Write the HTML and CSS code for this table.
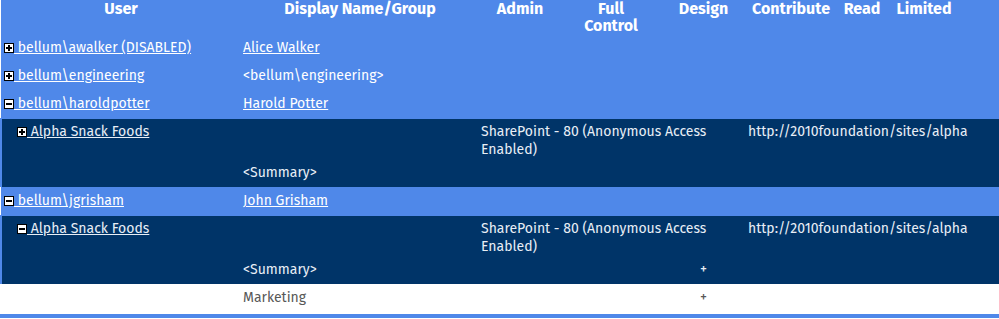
FILE: index.html
```html
<!DOCTYPE html>
<html>
<head>
<meta charset="utf-8">
<link rel="stylesheet" href="styles.css">
</head>
<body>
<table class="grid">
  <colgroup>
    <col class="c-user"><col class="c-name"><col class="c-admin"><col class="c-full"><col class="c-design"><col class="c-contrib"><col class="c-read"><col class="c-limited"><col class="c-rest">
  </colgroup>
  <thead>
    <tr class="head">
      <th>User</th><th>Display Name/Group</th><th>Admin</th><th>Full<br>Control</th><th>Design</th><th>Contribute</th><th>Read</th><th>Limited</th><th></th>
    </tr>
  </thead>
  <tbody>
    <tr class="user">
      <td><span class="tog plus"></span><a href="#"> bellum\awalker (DISABLED)</a></td>
      <td><a href="#">Alice Walker</a></td><td colspan="7"></td>
    </tr>
    <tr class="user">
      <td><span class="tog plus"></span><a href="#"> bellum\engineering</a></td>
      <td>&lt;bellum\engineering&gt;</td><td colspan="7"></td>
    </tr>
    <tr class="user">
      <td><span class="tog minus"></span><a href="#"> bellum\haroldpotter</a></td>
      <td><a href="#">Harold Potter</a></td><td colspan="7"></td>
    </tr>
    <tr class="site first">
      <td class="l"><span class="tog plus"></span><a href="#"> Alpha Snack Foods</a></td>
      <td></td>
      <td colspan="3">SharePoint - 80 (Anonymous Access Enabled)</td>
      <td colspan="4" class="r">http://2010foundation/sites/alpha</td>
    </tr>
    <tr class="site last">
      <td class="l"></td><td>&lt;Summary&gt;</td><td colspan="6"></td><td class="r"></td>
    </tr>
    <tr class="user">
      <td><span class="tog minus"></span><a href="#"> bellum\jgrisham</a></td>
      <td><a href="#">John Grisham</a></td><td colspan="7"></td>
    </tr>
    <tr class="site first">
      <td class="l"><span class="tog minus"></span><a href="#"> Alpha Snack Foods</a></td>
      <td></td>
      <td colspan="3">SharePoint - 80 (Anonymous Access Enabled)</td>
      <td colspan="4" class="r">http://2010foundation/sites/alpha</td>
    </tr>
    <tr class="site last">
      <td class="l"></td><td>&lt;Summary&gt;</td><td colspan="2"></td><td class="mark">+</td><td colspan="3"></td><td class="r"></td>
    </tr>
    <tr class="group">
      <td></td><td>Marketing</td><td colspan="2"></td><td class="mark">+</td><td colspan="4"></td>
    </tr>
  </tbody>
</table>
<div class="footline"></div>
</body>
</html>
```

FILE: styles.css
```css
html, body {
  margin: 0;
  padding: 0;
  background: #ffffff;
}
body {
  font-family: "Fira Sans", Lato, "Open Sans", sans-serif;
  font-size: 14px;
  color: #ffffff;
}
.grid {
  width: 999px;
  border-collapse: collapse;
  table-layout: fixed;
}
.c-user { width: 240px; }
.c-name { width: 238px; }
.c-admin { width: 82px; }
.c-full { width: 100px; }
.c-design { width: 85px; }
.c-contrib { width: 90px; }
.c-read { width: 52px; }
.c-limited { width: 72px; }
.c-rest { width: 40px; }

.head th {
  background: #4f88e9;
  color: #ffffff;
  font-weight: bold;
  font-size: 16px;
  line-height: 17px;
  height: 33px;
  padding: 0;
  vertical-align: top;
  text-align: center;
}
td {
  padding: 5px 0 5px 2px;
  line-height: 18px;
  vertical-align: top;
  white-space: normal;
}
td:first-child { padding-left: 3px; }
a {
  color: inherit;
  text-decoration: underline;
}
.user td {
  background: #4f88e9;
  color: #ffffff;
}
.site td {
  background: #003468;
  color: #e8eef6;
}
.site.first td { border-top: 1px solid #4f88e9; padding-top: 4px; padding-bottom: 0; }
.site td.l { border-left: 2px solid #4f88e9; padding-left: 15px; }
.site td.r { border-right: 2px solid #4f88e9; }
.group td {
  background: #ffffff;
  color: #585858;
  height: 18px;
}
.mark {
  text-align: center;
  padding-left: 0;
}
.tog {
  display: inline-block;
  width: 8px;
  height: 8px;
  border: 1px solid #000;
  background: #fff;
  position: relative;
  vertical-align: -1px;
}
.tog::before {
  content: "";
  position: absolute;
  left: 1px;
  top: 3px;
  width: 6px;
  height: 2px;
  background: #000;
}
.tog.plus::after {
  content: "";
  position: absolute;
  left: 3px;
  top: 1px;
  width: 2px;
  height: 6px;
  background: #000;
}
.footline {
  height: 4px;
  background: #4f88e9;
  margin-top: 2px;
}
```
